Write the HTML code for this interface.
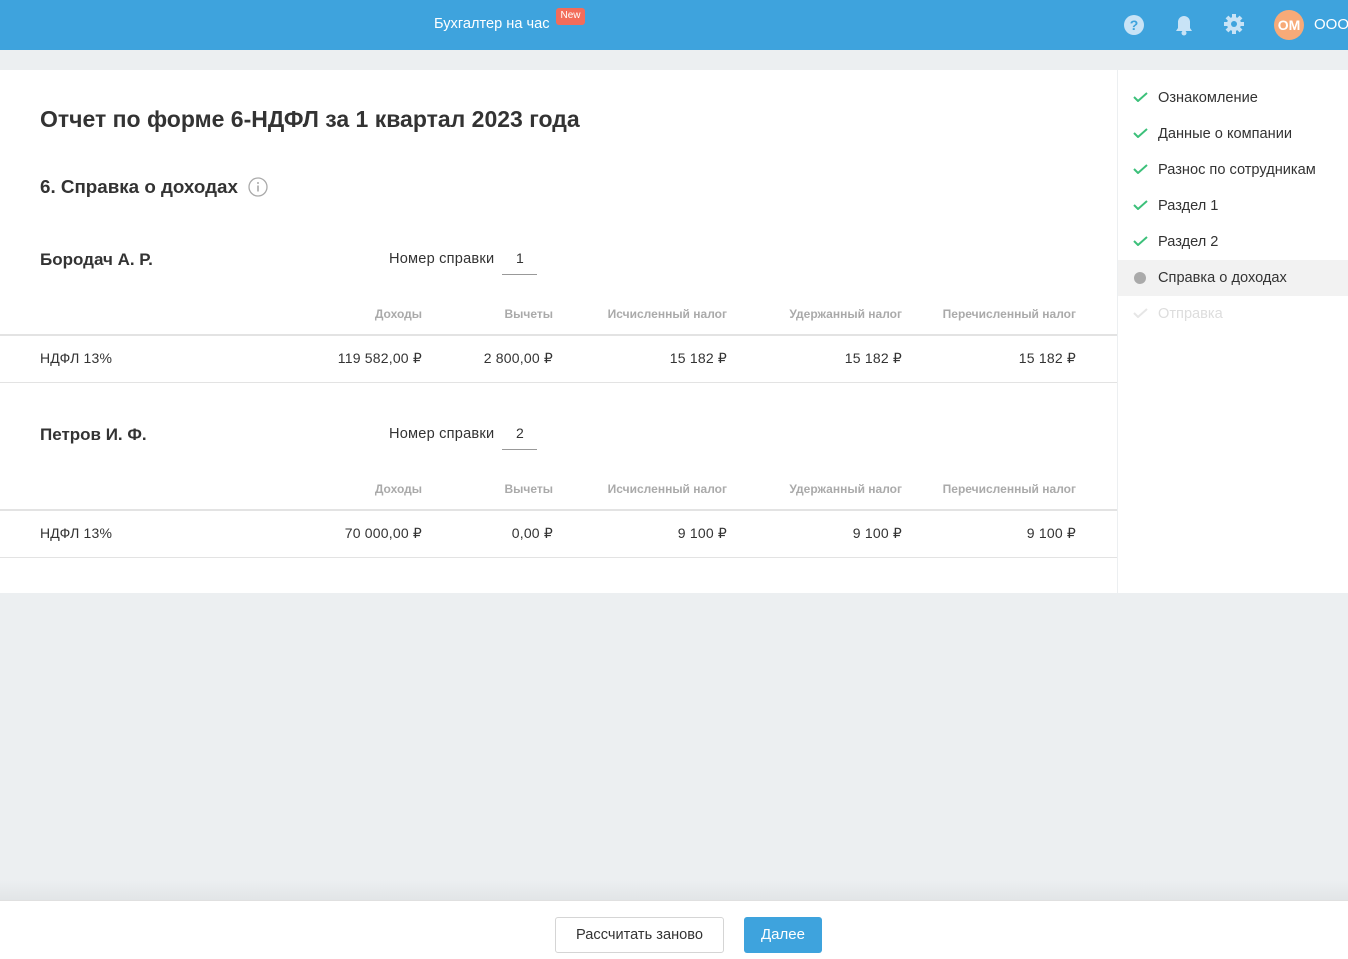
<!DOCTYPE html>
<html><head><meta charset="utf-8"><style>
*{margin:0;padding:0;box-sizing:border-box}
body{width:1348px;height:959px;background:#eceff1;font-family:"Liberation Sans",sans-serif;color:#333;position:relative;overflow:hidden}
.a{position:absolute;white-space:nowrap}
.hdr{left:0;top:0;width:1348px;height:50px;background:#3ea3dd}
.main{left:0;top:70px;width:1117px;height:523px;background:#fff}
.side{left:1118px;top:70px;width:230px;height:523px;background:#fff}
.th{font-size:12px;font-weight:bold;color:#aaa;text-align:right}
.td{font-size:14px;color:#333;text-align:right;letter-spacing:0.2px}
.ln{left:0;width:1117px;background:#e3e3e3}
.nav{left:1158px;font-size:14.6px;color:#333}
.ck{left:1133px;width:15px;height:10px}
</style></head><body>
<div class="a hdr"></div>
<div class="a" style="left:434px;top:16px;font-size:14.6px;color:#fff">Бухгалтер на час</div>
<div class="a" style="left:556px;top:8px;width:29px;height:17px;background:#f36c5a;border-radius:3px;color:#fff;font-size:10px;text-align:center;line-height:16px">New</div>
<svg class="a" style="left:1123px;top:14px" width="22" height="22" viewBox="0 0 22 22"><circle cx="11" cy="11" r="10" fill="#c8e3f6"/><text x="11" y="16" font-size="14" font-weight="bold" fill="#3ea3dd" text-anchor="middle" font-family="Liberation Sans">?</text></svg>
<svg class="a" style="left:1174px;top:14px" width="20" height="22" viewBox="0 0 20 22"><path d="M10 2a6 6 0 0 0-6 6v6l-2 3h16l-2-3V8a6 6 0 0 0-6-6z" fill="#c8e3f6"/><circle cx="10" cy="19" r="2.5" fill="#c8e3f6"/></svg>
<svg class="a" style="left:1223px;top:13px" width="22" height="22" viewBox="0 0 22 22"><g fill="#c8e3f6"><circle cx="11" cy="11" r="7"/><g stroke="#c8e3f6" stroke-width="4"><path d="M11 1v20M1 11h20M4 4l14 14M18 4L4 18"/></g></g><circle cx="11" cy="11" r="3" fill="#3ea3dd"/></svg>
<div class="a" style="left:1274px;top:10px;width:30px;height:30px;border-radius:50%;background:#f7aa78;color:#fff;font-weight:bold;font-size:14px;text-align:center;line-height:30px">ОМ</div>
<div class="a" style="left:1314px;top:16px;font-size:15px;color:#fff">ООО</div>

<div class="a main"></div>
<div class="a side"></div>
<div class="a" style="left:1118px;top:260px;width:230px;height:36px;background:#f2f2f2"></div>

<div class="a" style="left:40px;top:106px;font-size:23px;font-weight:bold;color:#333">Отчет по форме 6-НДФЛ за 1 квартал 2023 года</div>
<div class="a" style="left:40px;top:176px;font-size:18.8px;font-weight:bold;color:#333">6. Справка о доходах</div>
<svg class="a" style="left:248px;top:177px" width="20" height="20" viewBox="0 0 20 20"><circle cx="10" cy="10" r="9" fill="none" stroke="#aaa" stroke-width="1.3"/><rect x="9.2" y="8.5" width="1.6" height="6" fill="#aaa"/><circle cx="10" cy="6" r="1" fill="#aaa"/></svg>

<div class="a" style="left:40px;top:250px;font-size:17px;font-weight:bold">Бородач А. Р.</div>
<div class="a" style="left:389px;top:251px;font-size:14.6px;letter-spacing:0.2px">Номер справки</div>
<div class="a" style="left:516px;top:250px;font-size:14px">1</div>
<div class="a" style="left:502px;top:274px;width:35px;height:1px;background:#999"></div>
<div class="a th" style="right:926px;top:307px">Доходы</div>
<div class="a th" style="right:795px;top:307px">Вычеты</div>
<div class="a th" style="right:621px;top:307px">Исчисленный налог</div>
<div class="a th" style="right:446px;top:307px">Удержанный налог</div>
<div class="a th" style="right:272px;top:307px">Перечисленный налог</div>
<div class="a ln" style="top:334px;height:2px"></div>
<div class="a" style="left:40px;top:350px;font-size:14px;letter-spacing:0.2px">НДФЛ 13%</div>
<div class="a td" style="right:926px;top:350px">119 582,00 ₽</div>
<div class="a td" style="right:795px;top:350px">2 800,00 ₽</div>
<div class="a td" style="right:621px;top:350px">15 182 ₽</div>
<div class="a td" style="right:446px;top:350px">15 182 ₽</div>
<div class="a td" style="right:272px;top:350px">15 182 ₽</div>
<div class="a ln" style="top:382px;height:1px"></div>

<div class="a" style="left:40px;top:425px;font-size:17px;font-weight:bold">Петров И. Ф.</div>
<div class="a" style="left:389px;top:426px;font-size:14.6px;letter-spacing:0.2px">Номер справки</div>
<div class="a" style="left:516px;top:425px;font-size:14px">2</div>
<div class="a" style="left:502px;top:449px;width:35px;height:1px;background:#999"></div>
<div class="a th" style="right:926px;top:482px">Доходы</div>
<div class="a th" style="right:795px;top:482px">Вычеты</div>
<div class="a th" style="right:621px;top:482px">Исчисленный налог</div>
<div class="a th" style="right:446px;top:482px">Удержанный налог</div>
<div class="a th" style="right:272px;top:482px">Перечисленный налог</div>
<div class="a ln" style="top:509px;height:2px"></div>
<div class="a" style="left:40px;top:525px;font-size:14px;letter-spacing:0.2px">НДФЛ 13%</div>
<div class="a td" style="right:926px;top:525px">70 000,00 ₽</div>
<div class="a td" style="right:795px;top:525px">0,00 ₽</div>
<div class="a td" style="right:621px;top:525px">9 100 ₽</div>
<div class="a td" style="right:446px;top:525px">9 100 ₽</div>
<div class="a td" style="right:272px;top:525px">9 100 ₽</div>
<div class="a ln" style="top:557px;height:1px"></div>

<svg class="a ck" style="top:92px" viewBox="0 0 15 10"><path d="M1 5l4 4 9-8" fill="none" stroke="#3cc07a" stroke-width="2"/></svg>
<div class="a nav" style="top:90px">Ознакомление</div>
<svg class="a ck" style="top:128px" viewBox="0 0 15 10"><path d="M1 5l4 4 9-8" fill="none" stroke="#3cc07a" stroke-width="2"/></svg>
<div class="a nav" style="top:126px">Данные о компании</div>
<svg class="a ck" style="top:164px" viewBox="0 0 15 10"><path d="M1 5l4 4 9-8" fill="none" stroke="#3cc07a" stroke-width="2"/></svg>
<div class="a nav" style="top:162px">Разнос по сотрудникам</div>
<svg class="a ck" style="top:200px" viewBox="0 0 15 10"><path d="M1 5l4 4 9-8" fill="none" stroke="#3cc07a" stroke-width="2"/></svg>
<div class="a nav" style="top:198px">Раздел 1</div>
<svg class="a ck" style="top:236px" viewBox="0 0 15 10"><path d="M1 5l4 4 9-8" fill="none" stroke="#3cc07a" stroke-width="2"/></svg>
<div class="a nav" style="top:234px">Раздел 2</div>
<div class="a" style="left:1134px;top:272px;width:12px;height:12px;border-radius:50%;background:#aaa"></div>
<div class="a nav" style="top:270px">Справка о доходах</div>
<svg class="a ck" style="top:308px" viewBox="0 0 15 10"><path d="M1 5l4 4 9-8" fill="none" stroke="#e6e6e6" stroke-width="2"/></svg>
<div class="a nav" style="top:306px;color:#ddd">Отправка</div>

<div class="a" style="left:0;top:880px;width:1348px;height:20px;background:linear-gradient(#eceff1,#e2e5e7)"></div>
<div class="a" style="left:0;top:900px;width:1348px;height:59px;background:#fff;border-top:1px solid #e0e0e0"></div>
<div class="a" style="left:555px;top:917px;width:169px;height:36px;border:1px solid #d5d5d5;border-radius:3px;background:#fff;font-size:14.6px;text-align:center;line-height:34px">Рассчитать заново</div>
<div class="a" style="left:744px;top:917px;width:78px;height:36px;border-radius:3px;background:#3ea3dd;color:#fff;font-size:15px;text-align:center;line-height:36px">Далее</div>
</body></html>
